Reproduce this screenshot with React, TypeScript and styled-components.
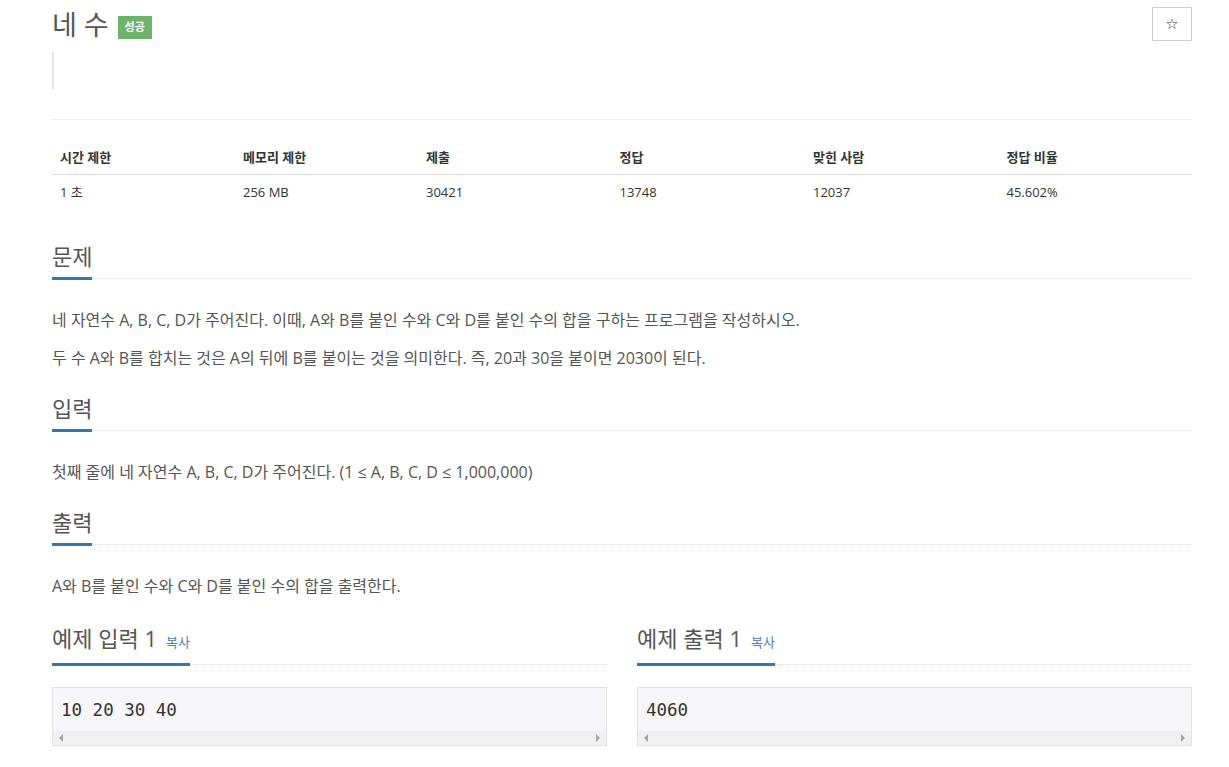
import React from "react";
import styled, { createGlobalStyle } from "styled-components";

const GlobalStyle = createGlobalStyle`
    body {
        margin: 0;
        background: #fff;
        font-family: "Open Sans", "Noto Sans CJK KR", sans-serif;
        color: #555;
    }
`;

const Page = styled.div`
    width: 1140px;
    margin-left: 52px;
    padding-top: 7px;
`;

const TitleRow = styled.div`
    display: flex;
    align-items: flex-start;
    justify-content: space-between;
`;

const Title = styled.h1`
    margin: 0;
    display: flex;
    align-items: center;
    gap: 9px;
    font-size: 27px;
    font-weight: 400;
    line-height: 36px;
    color: #555;
`;

const Badge = styled.span`
    display: inline-flex;
    align-items: center;
    justify-content: center;
    width: 34px;
    height: 23px;
    margin-top: 4px;
    background: #6fb36b;
    color: #fff;
    font-size: 11px;
    font-weight: 700;
`;

const StarButton = styled.button`
    width: 40px;
    height: 34px;
    background: #fff;
    border: 1px solid #ccc;
    border-radius: 1px;
    color: #333;
    font-size: 15px;
    font-family: "DejaVu Sans", sans-serif;
    padding: 0;
`;

const Quote = styled.div`
    margin-top: 9px;
    height: 37px;
    border-left: 2px solid #e6e6e6;
`;

const Rule = styled.hr`
    margin: 30px 0 20px;
    border: 0;
    border-top: 1px solid #eee;
`;

const Table = styled.table`
    width: 100%;
    border-collapse: collapse;
    font-size: 13px;
    color: #333;
    table-layout: fixed;
`;

const Th = styled.th<{ $w: number }>`
    width: ${p => p.$w}%;
    text-align: left;
    font-weight: 700;
    padding: 8px;
    line-height: 18px;
    border-bottom: 1px solid #ddd;
`;

const Td = styled.td`
    padding: 8px;
    line-height: 18px;
`;

const Section = styled.section<{ $gap?: number }>`
    display: flex;
    flex-direction: column;
    margin-top: ${p => p.$gap ?? 24}px;
`;

const Headline = styled.div`
    display: flex;
    border-bottom: 1px dotted #ddd;
`;

const HeadText = styled.h2`
    margin: 0 0 -2px;
    display: flex;
    align-items: baseline;
    gap: 9px;
    font-size: 22px;
    font-weight: 400;
    line-height: 24px;
    color: #555;
    padding-top: 4px;
    padding-bottom: 9px;
    border-bottom: 3px solid #3475b7;
`;

const Copy = styled.span`
    font-size: 13px;
    color: #4a80c0;
`;

const Body = styled.div`
    display: flex;
    flex-direction: column;
    gap: 14px;
    padding-top: 29px;
`;

const Para = styled.p`
    margin: 0;
    font-size: 16px;
    line-height: 24px;
    color: #555;
`;

const Samples = styled.div`
    display: grid;
    grid-template-columns: 1fr 1fr;
    gap: 30px;
    margin-top: 24px;
`;

const SampleBox = styled.div`
    margin-top: 22px;
    border: 1px solid #e1e1e8;
    background: #f7f7f9;
`;

const Code = styled.pre`
    margin: 0;
    padding: 12px 8px 11px;
    font-family: "DejaVu Sans Mono", "Liberation Mono", monospace;
    font-size: 17.5px;
    line-height: 20px;
    color: #333;
`;

const ScrollBar = styled.div`
    height: 14px;
    background: #f1f1f1;
    display: flex;
    align-items: center;
    justify-content: space-between;
    padding: 0 6px;
`;

const Arrow = styled.span<{ $dir: "left" | "right" }>`
    width: 0;
    height: 0;
    border-top: 4px solid transparent;
    border-bottom: 4px solid transparent;
    ${p =>
        p.$dir === "left"
            ? "border-right: 4px solid #a3a3a3;"
            : "border-left: 4px solid #a3a3a3;"}
`;

const cols = [
    ["시간 제한", "1 초", 16],
    ["메모리 제한", "256 MB", 16],
    ["제출", "30421", 17],
    ["정답", "13748", 17],
    ["맞힌 사람", "12037", 17],
    ["정답 비율", "45.602%", 17],
] as const;

const Sample = ({ title, value }: { title: string; value: string }) => (
    <div>
        <Headline>
            <HeadText>
                {title}
                <Copy>복사</Copy>
            </HeadText>
        </Headline>
        <SampleBox>
            <Code>{value}</Code>
            <ScrollBar>
                <Arrow $dir="left" />
                <Arrow $dir="right" />
            </ScrollBar>
        </SampleBox>
    </div>
);

const App = () => {
    return (
        <>
            <GlobalStyle />
            <Page>
                <TitleRow>
                    <Title>
                        네 수<Badge>성공</Badge>
                    </Title>
                    <StarButton>☆</StarButton>
                </TitleRow>
                <Quote />
                <Rule />
                <Table>
                    <thead>
                        <tr>
                            {cols.map(c => (
                                <Th key={c[0]} $w={c[2]}>
                                    {c[0]}
                                </Th>
                            ))}
                        </tr>
                    </thead>
                    <tbody>
                        <tr>
                            {cols.map(c => (
                                <Td key={c[0]}>{c[1]}</Td>
                            ))}
                        </tr>
                    </tbody>
                </Table>
                <Section $gap={31}>
                    <Headline>
                        <HeadText>문제</HeadText>
                    </Headline>
                    <Body>
                        <Para>
                            네 자연수 A, B, C, D가 주어진다. 이때, A와 B를 붙인 수와 C와 D를 붙인 수의 합을 구하는 프로그램을 작성하시오.
                        </Para>
                        <Para>
                            두 수 A와 B를 합치는 것은 A의 뒤에 B를 붙이는 것을 의미한다. 즉, 20과 30을 붙이면 2030이 된다.
                        </Para>
                    </Body>
                </Section>
                <Section $gap={22}>
                    <Headline>
                        <HeadText>입력</HeadText>
                    </Headline>
                    <Body>
                        <Para>첫째 줄에 네 자연수 A, B, C, D가 주어진다. (1 ≤ A, B, C, D ≤ 1,000,000)</Para>
                    </Body>
                </Section>
                <Section $gap={22}>
                    <Headline>
                        <HeadText>출력</HeadText>
                    </Headline>
                    <Body>
                        <Para>A와 B를 붙인 수와 C와 D를 붙인 수의 합을 출력한다.</Para>
                    </Body>
                </Section>
                <Samples>
                    <Sample title="예제 입력 1" value="10 20 30 40" />
                    <Sample title="예제 출력 1" value="4060" />
                </Samples>
            </Page>
        </>
    );
};

export default App;
